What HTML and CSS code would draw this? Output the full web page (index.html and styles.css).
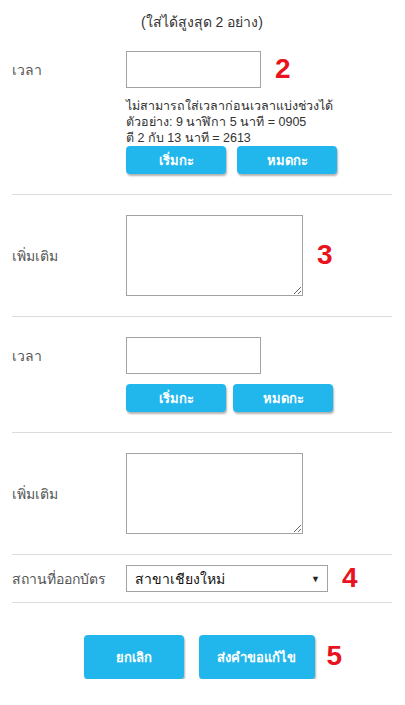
FILE: index.html
```html
<!DOCTYPE html>
<html lang="th">
<head>
<meta charset="utf-8">
<link rel="stylesheet" href="styles.css">
</head>
<body>
<div class="page">
  <div class="title">(ใส่ได้สูงสุด 2 อย่าง)</div>

  <div class="row row-first">
    <div class="label">เวลา</div>
    <div class="ctrl">
      <input class="time" type="text">
      <span class="mark">2</span>
    </div>
    <div class="extra">
      <div class="help">ไม่สามารถใส่เวลาก่อนเวลาแบ่งช่วงได้<br>ตัวอย่าง: 9 นาฬิกา 5 นาที = 0905<br>ตี 2 กับ 13 นาที = 2613</div>
      <div class="btns gap-wide">
        <button class="btn small">เริ่มกะ</button>
        <button class="btn small">หมดกะ</button>
      </div>
    </div>
  </div>

  <div class="row">
    <div class="label">เพิ่มเติม</div>
    <div class="ctrl">
      <textarea class="note"></textarea>
      <span class="mark">3</span>
    </div>
  </div>

  <div class="row">
    <div class="label">เวลา</div>
    <div class="ctrl">
      <input class="time" type="text">
    </div>
    <div class="extra">
      <div class="btns gap-narrow spaced">
        <button class="btn small">เริ่มกะ</button>
        <button class="btn small">หมดกะ</button>
      </div>
    </div>
  </div>

  <div class="row">
    <div class="label">เพิ่มเติม</div>
    <div class="ctrl">
      <textarea class="note"></textarea>
    </div>
  </div>

  <div class="row row-select">
    <div class="label">สถานที่ออกบัตร</div>
    <div class="ctrl">
      <div class="select">
        <span>สาขาเชียงใหม่</span>
        <span class="arrow">▼</span>
      </div>
      <span class="mark">4</span>
    </div>
  </div>

  <div class="actions">
    <div class="action-group">
      <button class="btn big cancel">ยกเลิก</button>
      <button class="btn big submit">ส่งคำขอแก้ไข</button>
      <span class="mark mark-abs">5</span>
    </div>
  </div>
</div>
</body>
</html>
```

FILE: styles.css
```css
* { box-sizing: border-box; }
html, body { margin: 0; padding: 0; background: #fff; }
body {
  font-family: Tahoma, "Liberation Sans", "Noto Sans", sans-serif;
  font-size: 13px;
  color: #333;
}
.page { width: 405px; padding: 0 13px 0 12px; }
.title {
  text-align: center;
  font-size: 14px;
  line-height: 20px;
  padding-top: 12px;
  margin-bottom: 19px;
}
.row {
  display: grid;
  grid-template-columns: 114px 1fr;
  padding: 20px 0;
  border-bottom: 1px solid #dcdcdc;
}
.row-first { padding-top: 0; }
.row-select { padding: 10px 0; }
.label {
  grid-column: 1;
  grid-row: 1;
  align-self: center;
  font-size: 14px;
  color: #555;
}
.ctrl {
  grid-column: 2;
  grid-row: 1;
  display: flex;
  align-items: center;
}
.extra { grid-column: 2; grid-row: 2; }
.time {
  width: 135px;
  height: 37px;
  border: 1px solid #a3a3a3;
  margin: 0;
  padding: 0 4px;
}
.note {
  width: 177px;
  height: 81px;
  border: 1px solid #a3a3a3;
  margin: 0;
  display: block;
}
.mark {
  color: #e8131c;
  font-family: "Liberation Sans", Arial, sans-serif;
  font-weight: bold;
  font-size: 28px;
  line-height: 1;
  margin-left: 14px;
  margin-top: -2px;
}
.help {
  margin-top: 10px;
  line-height: 16px;
  font-size: 12.5px;
  color: #333;
}
.btns { display: flex; }
.gap-wide { gap: 11px; }
.gap-narrow { gap: 7px; }
.spaced { margin-top: 10px; }
.btn {
  border: 0;
  margin: 0;
  padding: 0;
  background: #22b7ec;
  color: #fff;
  font-family: Tahoma, "Liberation Sans", "Noto Sans", sans-serif;
  font-weight: bold;
  font-size: 13px;
  border-radius: 4px;
  box-shadow: 1px 2px 2px rgba(0,0,0,0.3);
}
.small { width: 100px; height: 28px; }
.big { height: 44px; }
.cancel { width: 100px; }
.submit { width: 116px; }
.select {
  width: 202px;
  height: 27px;
  border: 1px solid #a3a3a3;
  display: flex;
  align-items: center;
  justify-content: space-between;
  padding: 0 7px 0 8px;
  font-size: 14px;
  color: #111;
}
.arrow { font-size: 9px; color: #222; }
.actions {
  display: flex;
  justify-content: center;
  padding-top: 32px;
  padding-right: 6px;
}
.action-group { display: flex; gap: 15px; position: relative; }
.mark-abs {
  position: absolute;
  left: 100%;
  top: 9px;
  margin-left: 12px;
}
```
